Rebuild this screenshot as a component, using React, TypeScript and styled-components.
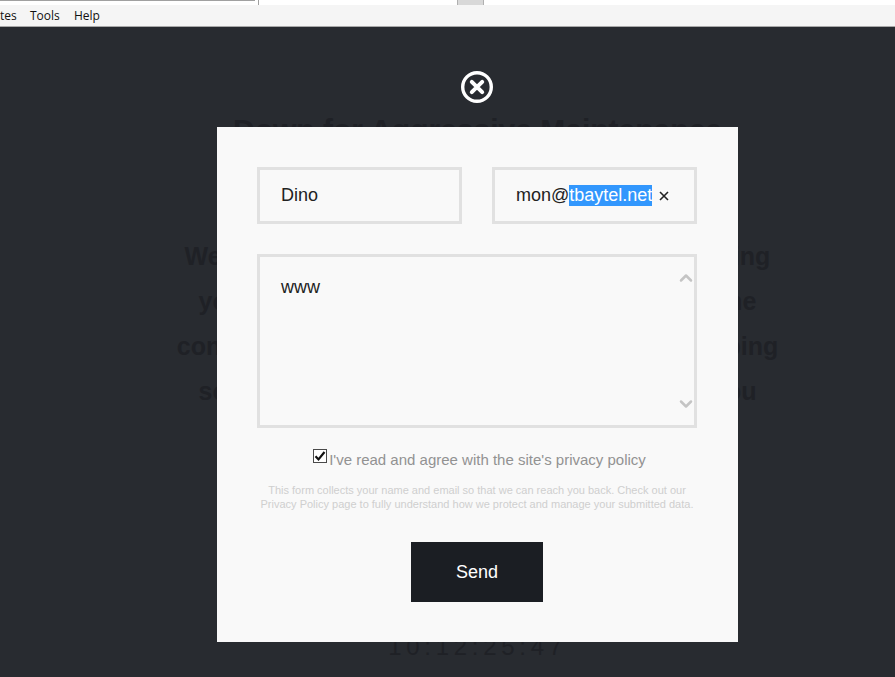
import styled, { createGlobalStyle } from "styled-components";
import { ChevronUp, ChevronDown } from "lucide-react";

const Global = createGlobalStyle`
  html, body {
    margin: 0;
    padding: 0;
    height: 100%;
    overflow: hidden;
    background: #282b30;
    font-family: "Liberation Sans", Arial, sans-serif;
  }
  * {
    box-sizing: border-box;
  }
`;

const Screen = styled.div`
  position: relative;
  width: 895px;
  height: 677px;
  overflow: hidden;
  display: flex;
  flex-direction: column;
`;

const TabStrip = styled.div`
  height: 5px;
  background: #fff;
  display: flex;
  flex-shrink: 0;
`;

const AddressEnd = styled.div`
  width: 255px;
  height: 1px;
  background: #a0a0a0;
`;

const SearchBox = styled.div`
  margin-left: 3px;
  width: 226px;
  border-left: 1px solid #a0a0a0;
  display: flex;
  justify-content: flex-end;
`;

const DropButton = styled.div`
  width: 27px;
  background: #d8d8d8;
  border: 1px solid #b0b0b0;
  border-top: none;
  border-bottom: none;
`;

const MenuBar = styled.div`
  height: 22px;
  flex-shrink: 0;
  background: #f5f5f5;
  border-bottom: 1px solid #a8a8a8;
  display: flex;
  align-items: center;
  font-family: "Open Sans", "Noto Sans", sans-serif;
  font-size: 12px;
  color: #111;
`;

const MenuItem = styled.span<{ $width: number }>`
  width: ${(p) => p.$width}px;
`;

const Page = styled.div`
  flex: 1;
  display: flex;
  flex-direction: column;
  align-items: center;
  padding-top: 85px;
  padding-left: 60px;
  color: #1f2126;
`;

const Headline = styled.h1`
  margin: 0 0 86px;
  font-size: 30px;
  line-height: 36px;
  font-weight: 700;
  white-space: nowrap;
`;

const Lead = styled.p`
  margin: 0;
  text-align: center;
  font-size: 25px;
  line-height: 45px;
  font-weight: 700;
`;

const LeadLine = styled.span`
  display: block;
  white-space: nowrap;
`;

const Clock = styled.div`
  margin-top: 215px;
  font-size: 24px;
  letter-spacing: 4.7px;
  line-height: 36px;
`;

const CloseButton = styled.button`
  position: absolute;
  left: 460px;
  top: 70px;
  width: 34px;
  height: 34px;
  padding: 0;
  border: none;
  background: none;
  display: block;
`;

const Modal = styled.form`
  position: absolute;
  left: 217px;
  top: 127px;
  width: 521px;
  height: 515px;
  background: #f9f9f9;
  padding: 40px 41px 40px 40px;
  display: flex;
  flex-direction: column;
`;

const FieldRow = styled.div`
  display: flex;
  justify-content: space-between;
`;

const Field = styled.div`
  width: 205px;
  height: 57px;
  border: 3px solid #e1e1e1;
  display: flex;
  align-items: center;
  padding: 0 21px;
  font-size: 18px;
  color: #222;
  white-space: nowrap;
`;

const Selected = styled.span`
  background: #3297fd;
  color: #fff;
  line-height: 21px;
`;

const ClearMark = styled.svg`
  margin-left: 7px;
  margin-top: 1px;
  flex-shrink: 0;
`;

const MessageBox = styled.div`
  position: relative;
  margin-top: 30px;
  height: 175px;
  border: 3px solid #e1e1e1;
  padding: 19px 21px;
  font-size: 18px;
  line-height: 22px;
  color: #222;
`;

const ScrollUp = styled(ChevronUp)`
  position: absolute;
  right: -2px;
  top: 11px;
  color: #c4c4c4;
`;

const ScrollDown = styled(ChevronDown)`
  position: absolute;
  right: -2px;
  bottom: 11px;
  color: #c4c4c4;
`;

const ConsentRow = styled.label`
  margin-top: 21px;
  padding-left: 5px;
  display: flex;
  justify-content: center;
  align-items: flex-start;
  gap: 2px;
  font-size: 15px;
  line-height: 22px;
  color: #929292;
`;

const ConsentBox = styled.span`
  width: 14px;
  height: 14px;
  background: #fff;
  border: 1px solid #4a4a4a;
  display: flex;
  align-items: center;
  justify-content: center;
`;

const Notice = styled.p`
  margin: 12px -5px 0;
  text-align: center;
  font-size: 11px;
  line-height: 14px;
  color: #cfcfcf;
`;

const SendButton = styled.button`
  align-self: center;
  margin-top: 31px;
  width: 132px;
  height: 60px;
  border: none;
  background: #1b1e23;
  color: #fff;
  font-family: inherit;
  font-size: 18px;
`;

export default function App() {
  return (
    <Screen>
      <Global />
      <TabStrip>
        <AddressEnd />
        <SearchBox>
          <DropButton />
        </SearchBox>
      </TabStrip>
      <MenuBar>
        <MenuItem $width={30}>tes</MenuItem>
        <MenuItem $width={44}>Tools</MenuItem>
        <MenuItem $width={40}>Help</MenuItem>
      </MenuBar>
      <Page>
        <Headline>Down for Aggressive Maintenance</Headline>
        <Lead>
          <LeadLine>We are currently performing some site upgrading</LeadLine>
          <LeadLine>you the finest experience. We apologize for the</LeadLine>
          <LeadLine>continued inconveniences, and thanks for keeping</LeadLine>
          <LeadLine>so patient with us. We shall be back, thank you</LeadLine>
        </Lead>
        <Clock>10:12:25:47</Clock>
      </Page>
      <CloseButton type="button" aria-label="Close">
        <svg width="34" height="34" viewBox="0 0 34 34" fill="none">
          <circle cx="17" cy="17" r="14.3" stroke="#fff" strokeWidth="3.4" />
          <path d="M11.8 11.8l10.4 10.4M22.2 11.8L11.8 22.2" stroke="#fff" strokeWidth="4" strokeLinecap="round" />
        </svg>
      </CloseButton>
      <Modal>
        <FieldRow>
          <Field>Dino</Field>
          <Field>
            mon@<Selected>tbaytel.net</Selected>
            <ClearMark width="10" height="10" viewBox="0 0 10 10">
              <path d="M1 1l8 8M9 1L1 9" stroke="#222" strokeWidth="1.6" />
            </ClearMark>
          </Field>
        </FieldRow>
        <MessageBox>
          www
          <ScrollUp size={20} strokeWidth={3} />
          <ScrollDown size={20} strokeWidth={3} />
        </MessageBox>
        <ConsentRow>
          <ConsentBox>
            <svg width="12" height="12" viewBox="0 0 12 12" fill="none">
              <path d="M1.5 6.2l3 3.2 6-7.4" stroke="#111" strokeWidth="2.2" />
            </svg>
          </ConsentBox>
          I've read and agree with the site's privacy policy
        </ConsentRow>
        <Notice>
          This form collects your name and email so that we can reach you back. Check out our
          <br />
          Privacy Policy page to fully understand how we protect and manage your submitted data.
        </Notice>
        <SendButton type="button">Send</SendButton>
      </Modal>
    </Screen>
  );
}
